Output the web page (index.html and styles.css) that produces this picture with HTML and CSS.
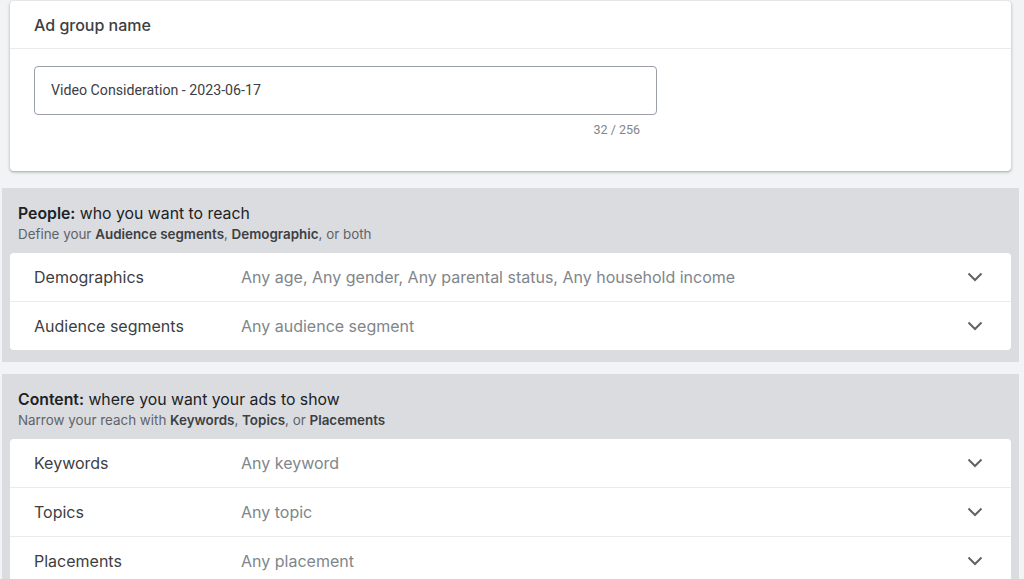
FILE: index.html
```html
<!DOCTYPE html>
<html>
<head>
<meta charset="utf-8">
<link rel="stylesheet" href="styles.css">
</head>
<body>
<div class="card">
  <div class="card-head">Ad group name</div>
  <div class="card-body">
    <div class="field">
      <div class="input">Video Consideration - 2023-06-17</div>
      <div class="counter">32 / 256</div>
    </div>
  </div>
</div>

<section class="panel">
  <div class="panel-title"><b>People:</b> who you want to reach</div>
  <div class="panel-sub">Define your <b>Audience segments</b>, <b>Demographic</b>, or both</div>
  <div class="rows">
    <div class="row"><span class="label">Demographics</span><span class="value">Any age, Any gender, Any parental status, Any household income</span><svg class="chev" viewBox="0 0 16 10" width="16" height="10"><path d="M1.5 1.5 L8 8 L14.5 1.5" fill="none" stroke="#5f6368" stroke-width="2"/></svg></div>
    <div class="row"><span class="label">Audience segments</span><span class="value">Any audience segment</span><svg class="chev" viewBox="0 0 16 10" width="16" height="10"><path d="M1.5 1.5 L8 8 L14.5 1.5" fill="none" stroke="#5f6368" stroke-width="2"/></svg></div>
  </div>
</section>

<section class="panel">
  <div class="panel-title"><b>Content:</b> where you want your ads to show</div>
  <div class="panel-sub">Narrow your reach with <b>Keywords</b>, <b>Topics</b>, or <b>Placements</b></div>
  <div class="rows">
    <div class="row"><span class="label">Keywords</span><span class="value">Any keyword</span><svg class="chev" viewBox="0 0 16 10" width="16" height="10"><path d="M1.5 1.5 L8 8 L14.5 1.5" fill="none" stroke="#5f6368" stroke-width="2"/></svg></div>
    <div class="row"><span class="label">Topics</span><span class="value">Any topic</span><svg class="chev" viewBox="0 0 16 10" width="16" height="10"><path d="M1.5 1.5 L8 8 L14.5 1.5" fill="none" stroke="#5f6368" stroke-width="2"/></svg></div>
    <div class="row"><span class="label">Placements</span><span class="value">Any placement</span><svg class="chev" viewBox="0 0 16 10" width="16" height="10"><path d="M1.5 1.5 L8 8 L14.5 1.5" fill="none" stroke="#5f6368" stroke-width="2"/></svg></div>
  </div>
</section>
</body>
</html>
```

FILE: styles.css
```css
html, body {
  margin: 0;
  padding: 0;
}
body {
  background: #f1f3f4;
  font-family: Inter, "Open Sans", Roboto, "Liberation Sans", sans-serif;
  color: #3c4043;
  padding-top: 1px;
}
.card {
  margin-left: 10px;
  width: 1001px;
  background: #fff;
  border-radius: 4px;
  box-shadow: 0 1px 2px rgba(60,64,67,.3), 0 1px 3px 1px rgba(60,64,67,.12);
}
.card-head {
  height: 46px;
  line-height: 46px;
  padding: 1px 0 0 24px;
  font-size: 16px;
  font-weight: 500;
  border-bottom: 1px solid #e8eaed;
}
.card-body {
  padding: 17px 24px 0;
  height: 122px;
  box-sizing: border-box;
}
.field {
  width: 623px;
}
.input {
  height: 49px;
  box-sizing: border-box;
  border: 1px solid #9aa0a6;
  border-radius: 4px;
  padding-left: 16px;
  line-height: 47px;
  font-family: Roboto, "Liberation Sans", sans-serif;
  font-size: 14.2px;
  color: #3c4043;
}
.counter {
  text-align: right;
  padding-right: 17px;
  font-family: Roboto, "Liberation Sans", sans-serif;
  font-size: 12.5px;
  color: #80868b;
  margin-top: 7px;
}
.panel {
  margin: 17px 0 0 2px;
  width: 1017px;
  background: #dadce0;
  padding: 15px 8px 12px;
  box-sizing: border-box;
}
.panel + .panel {
  margin-top: 12px;
}
.panel-title {
  font-size: 15.8px;
  line-height: 22px;
  color: #202124;
  padding-left: 8px;
}
.panel-title b {
  font-weight: 600;
}
.panel-sub {
  font-size: 13.4px;
  line-height: 18px;
  color: #5f6368;
  padding-left: 8px;
  margin-bottom: 10px;
}
.panel-sub b {
  color: #3c4043;
  font-weight: 600;
}
.rows {
  display: flex;
  flex-direction: column;
  gap: 1px;
  background: #e8eaed;
  border-radius: 4px;
  overflow: hidden;
}
.row {
  display: flex;
  align-items: center;
  height: 48px;
  background: #fff;
  padding: 0 28px 0 24px;
  font-size: 16px;
}
.label {
  width: 207px;
  flex: none;
  color: #3c4043;
}
.value {
  flex: 1;
  color: #80868b;
}
.chev {
  flex: none;
}
```
